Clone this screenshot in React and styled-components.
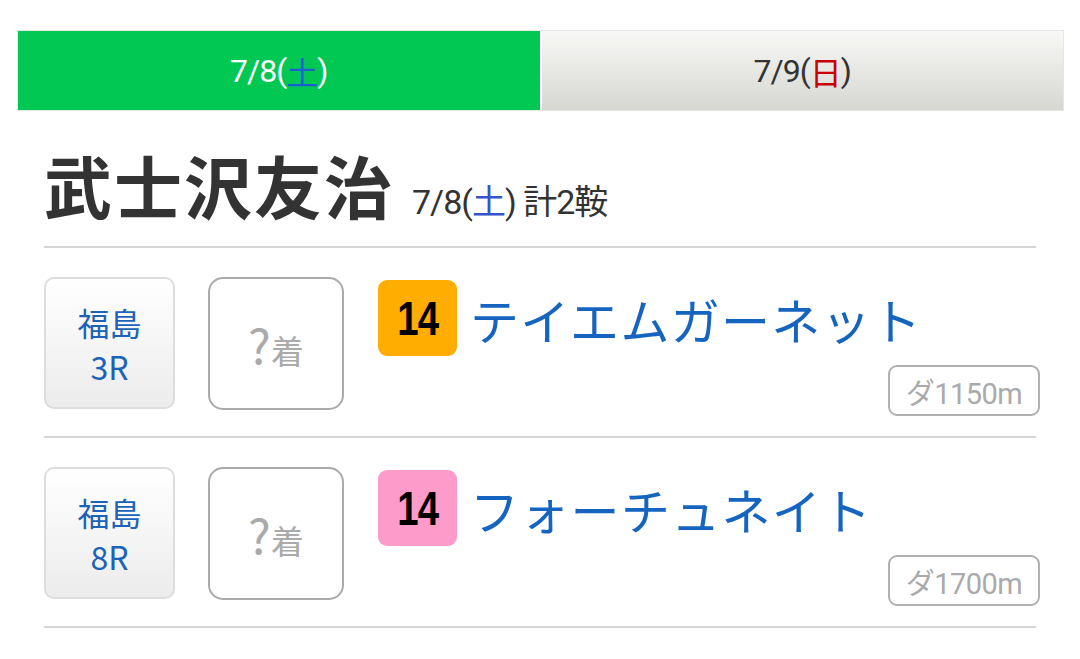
import React from 'react';
import styled, { createGlobalStyle } from 'styled-components';

const rides = [
  { id: 1, venue: '福島', race: '3R', num: 14, color: '#ffad00', horse: 'テイエムガーネット', dist: 'ダ1150m' },
  { id: 2, venue: '福島', race: '8R', num: 14, color: '#fd9ccb', horse: 'フォーチュネイト', dist: 'ダ1700m' },
];

const App = () => {
  return (
    <Page>
      <GlobalStyle />
      <Tabs>
        <Tab active>7/8(<Sat>土</Sat>)</Tab>
        <Tab>7/9(<Sun>日</Sun>)</Tab>
      </Tabs>
      <Content>
        <Title>
          <Name>武士沢友治</Name>
          <Sub>7/8(<Sat dark>土</Sat>) 計2鞍</Sub>
        </Title>
        {rides.map((ride) => (
          <Row key={ride.id}>
            <Venue>
              <span>{ride.venue}</span>
              <span>{ride.race}</span>
            </Venue>
            <Result>
              <Question>?</Question>
              <Rank>着</Rank>
            </Result>
            <Info>
              <HorseLine>
                <Badge color={ride.color}><span>{ride.num}</span></Badge>
                <Horse>{ride.horse}</Horse>
              </HorseLine>
              <Distance>{ride.dist}</Distance>
            </Info>
          </Row>
        ))}
      </Content>
    </Page>
  );
};

export default App;

const GlobalStyle = createGlobalStyle`
  body {
    margin: 0;
    background: #fff;
    font-family: Roboto, "Noto Sans CJK JP", sans-serif;
  }
`;

const Page = styled.div`
  width: 1080px;
  height: 659px;
  overflow: hidden;
  padding-top: 30px;
  box-sizing: border-box;
`;

const Tabs = styled.div`
  display: grid;
  grid-template-columns: 1fr 1fr;
  gap: 2px;
  margin: 0 16px 0 17px;
  border: 1px solid #e6e6e6;
  height: 79px;
`;

const Tab = styled.div`
  display: flex;
  align-items: center;
  justify-content: center;
  font-size: 32px;
  letter-spacing: -1px;
  color: ${(p) => (p.active ? '#fff' : '#333')};
  background: ${(p) => (p.active ? '#00c853' : 'linear-gradient(#f8f8f6, #d6d6d2)')};
`;

const Sat = styled.span`
  color: ${(p) => (p.dark ? '#3653c9' : '#1e5fd0')};
  font-family: "Noto Sans CJK JP", sans-serif;
`;

const Sun = styled.span`
  color: #c80000;
  font-family: "Noto Sans CJK JP", sans-serif;
`;

const Content = styled.div`
  margin: 0 44px;
`;

const Title = styled.div`
  display: flex;
  align-items: baseline;
  gap: 18px;
  padding: 34px 0 21px 0;
  border-bottom: 2px solid #d6d6d6;
  color: #333;
`;

const Name = styled.h1`
  margin: 0;
  font-family: "Noto Sans CJK JP", sans-serif;
  font-size: 68px;
  font-weight: 700;
  line-height: 80px;
  letter-spacing: 2px;
`;

const Sub = styled.span`
  font-size: 34px;
  letter-spacing: -1px;
`;

const Row = styled.div`
  display: flex;
  align-items: flex-start;
  padding: 29px 0 20px;
  border-bottom: 2px solid #d6d6d6;
`;

const Venue = styled.div`
  width: 131px;
  height: 132px;
  box-sizing: border-box;
  display: flex;
  flex-direction: column;
  align-items: center;
  justify-content: center;
  padding-top: 2px;
  border: 2px solid #ddd;
  border-radius: 10px;
  background: linear-gradient(#fff, #ececec);
  color: #1a63b8;
  font-family: "Noto Sans CJK JP", sans-serif;
  font-size: 32px;
  line-height: 44px;
`;

const Result = styled.div`
  width: 136px;
  height: 133px;
  box-sizing: border-box;
  margin-left: 33px;
  display: flex;
  align-items: baseline;
  justify-content: center;
  padding-top: 36px;
  border: 2px solid #aaa;
  border-radius: 15px;
  color: #aaa;
  font-family: "Noto Sans CJK JP", sans-serif;
`;

const Question = styled.span`
  font-size: 48px;
  line-height: 56px;
`;

const Rank = styled.span`
  font-size: 33px;
`;

const Info = styled.div`
  flex: 1;
  margin-left: 34px;
  display: flex;
  flex-direction: column;
  align-items: flex-end;
`;

const HorseLine = styled.div`
  align-self: stretch;
  display: flex;
  align-items: center;
  gap: 13px;
  margin-top: 3px;
`;

const Badge = styled.div`
  width: 79px;
  height: 76px;
  border-radius: 9px;
  background: ${(p) => p.color};
  display: flex;
  align-items: center;
  justify-content: center;
  span {
    display: inline-block;
    font-family: "Liberation Sans", sans-serif;
    font-weight: 700;
    font-size: 48px;
    color: #000;
    transform: scaleX(0.8);
    letter-spacing: -1px;
  }
`;

const Horse = styled.span`
  font-family: "Noto Sans CJK JP", sans-serif;
  font-size: 49px;
  color: #1565c0;
  letter-spacing: 1.3px;
`;

const Distance = styled.div`
  margin-top: 9px;
  margin-right: -4px;
  width: 152px;
  height: 51px;
  box-sizing: border-box;
  display: flex;
  align-items: center;
  justify-content: center;
  border: 2px solid #b0b0b0;
  border-radius: 9px;
  color: #aaa;
  font-size: 29px;
  letter-spacing: -0.5px;
`;
